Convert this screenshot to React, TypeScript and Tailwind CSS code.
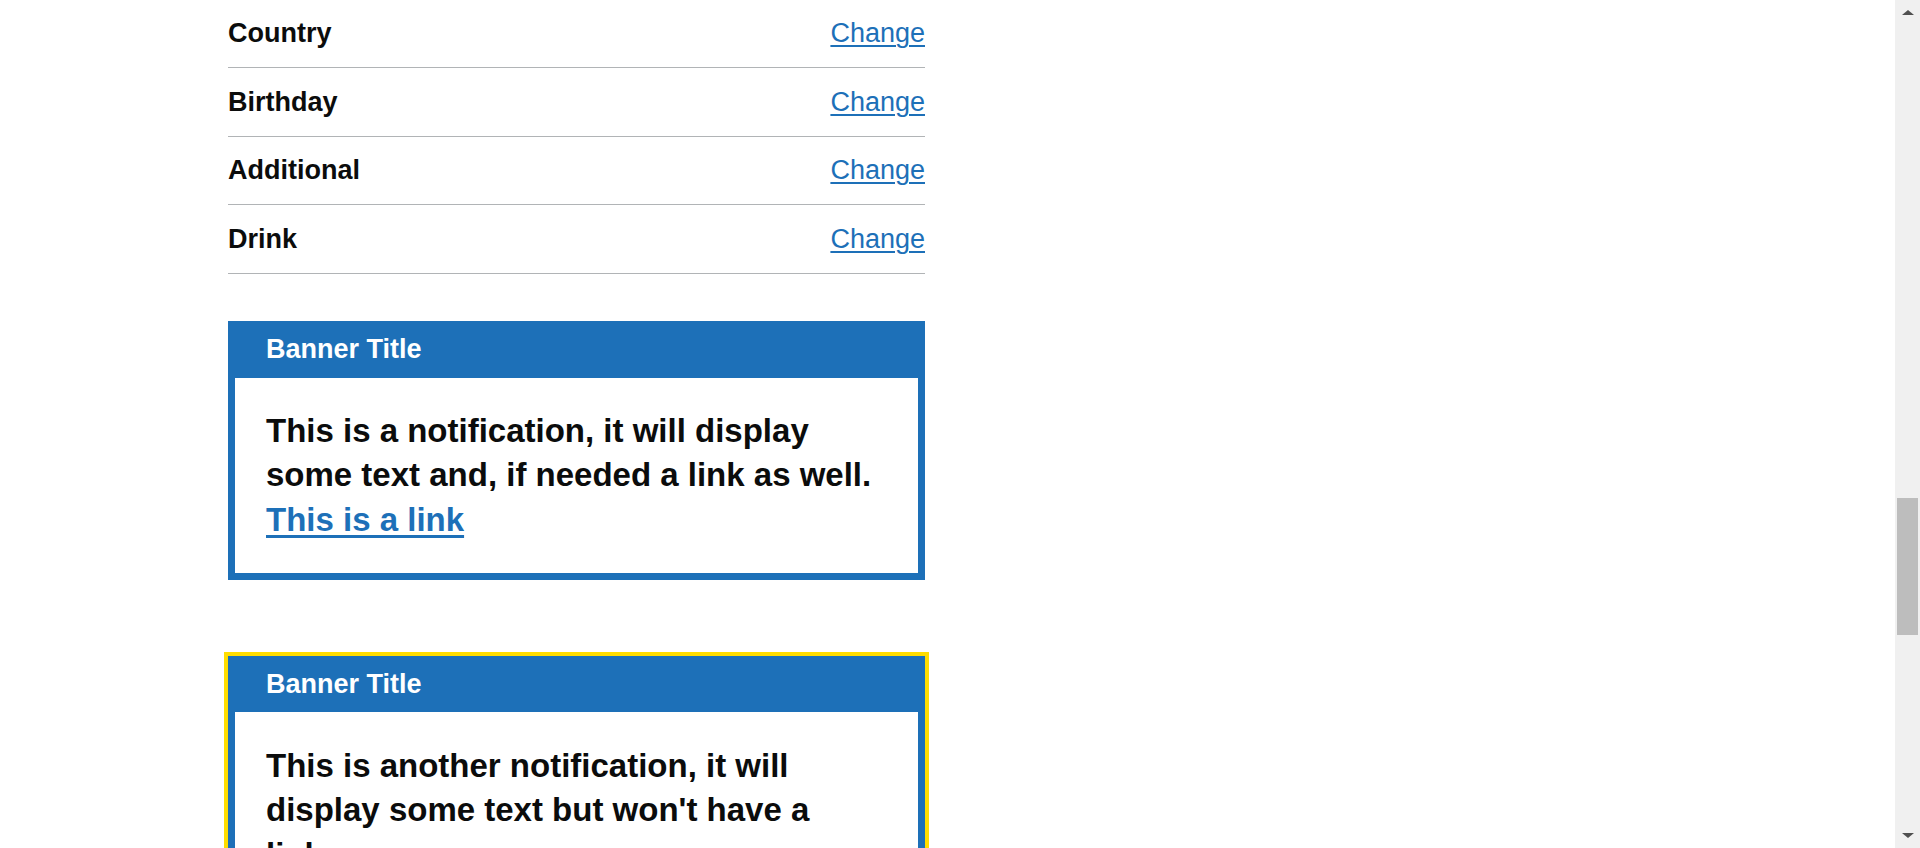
import React from "react";

const rows = ["Country", "Birthday", "Additional", "Drink"];

function Banner({ focused, children }: { focused?: boolean; children: React.ReactNode }) {
  return (
    <div
      className={
        "border-[7px] border-[#1d70b8] bg-[#1d70b8] " +
        (focused ? "outline-[4px] outline-solid outline-[#ffdd00]" : "")
      }
    >
      <div className="h-[49.7px] pt-[6px] pl-[31px] text-[27px] leading-[30px] font-bold text-white">
        Banner Title
      </div>
      <div className="bg-white pl-[31px] pt-[31.3px] pb-[30.8px]">
        <p className="max-w-[612px] text-[33px] leading-[44.5px] font-bold text-[#0b0c0c]">{children}</p>
      </div>
    </div>
  );
}

export default function App() {
  return (
    <div
      className="flex h-[848px] w-full overflow-hidden bg-white"
      style={{ fontFamily: '"Liberation Sans", Arial, sans-serif' }}
    >
      <div className="flex-1 overflow-hidden">
        <div className="ml-[228px] w-[697px]">
          <div>
            {rows.map((r) => (
              <div
                key={r}
                className="flex h-[68.4px] items-center justify-between border-b border-[#b1b4b6]"
              >
                <span className="text-[27px] font-bold text-[#0b0c0c]">{r}</span>
                <a
                  href="#"
                  className="text-[27px] text-[#1d70b8] underline decoration-[2px] underline-offset-[3px]"
                >
                  Change
                </a>
              </div>
            ))}
          </div>
          <div className="mt-[47.4px]">
            <Banner>
              This is a notification, it will display some text and, if needed a link as well.{" "}
              <a href="#" className="text-[#1d70b8] underline decoration-[3px] underline-offset-[4px]">
                This is a link
              </a>
            </Banner>
          </div>
          <div className="mt-[75.4px]">
            <Banner focused>
              This is another notification, it will display some text but won't have a link.
            </Banner>
          </div>
        </div>
      </div>
      <div className="flex w-[25px] flex-col bg-[#f0f0f0]">
        <div className="flex h-[25px] w-full items-center justify-center">
          <div className="h-0 w-0 border-x-[6px] border-b-[5px] border-x-transparent border-b-[#505050]" />
        </div>
        <div className="w-full flex-1 px-[2px]">
          <div className="mt-[473px] h-[137px] w-full bg-[#bdbdbd]" />
        </div>
        <div className="flex h-[25px] w-full items-center justify-center">
          <div className="h-0 w-0 border-x-[6px] border-t-[5px] border-x-transparent border-t-[#505050]" />
        </div>
      </div>
    </div>
  );
}
